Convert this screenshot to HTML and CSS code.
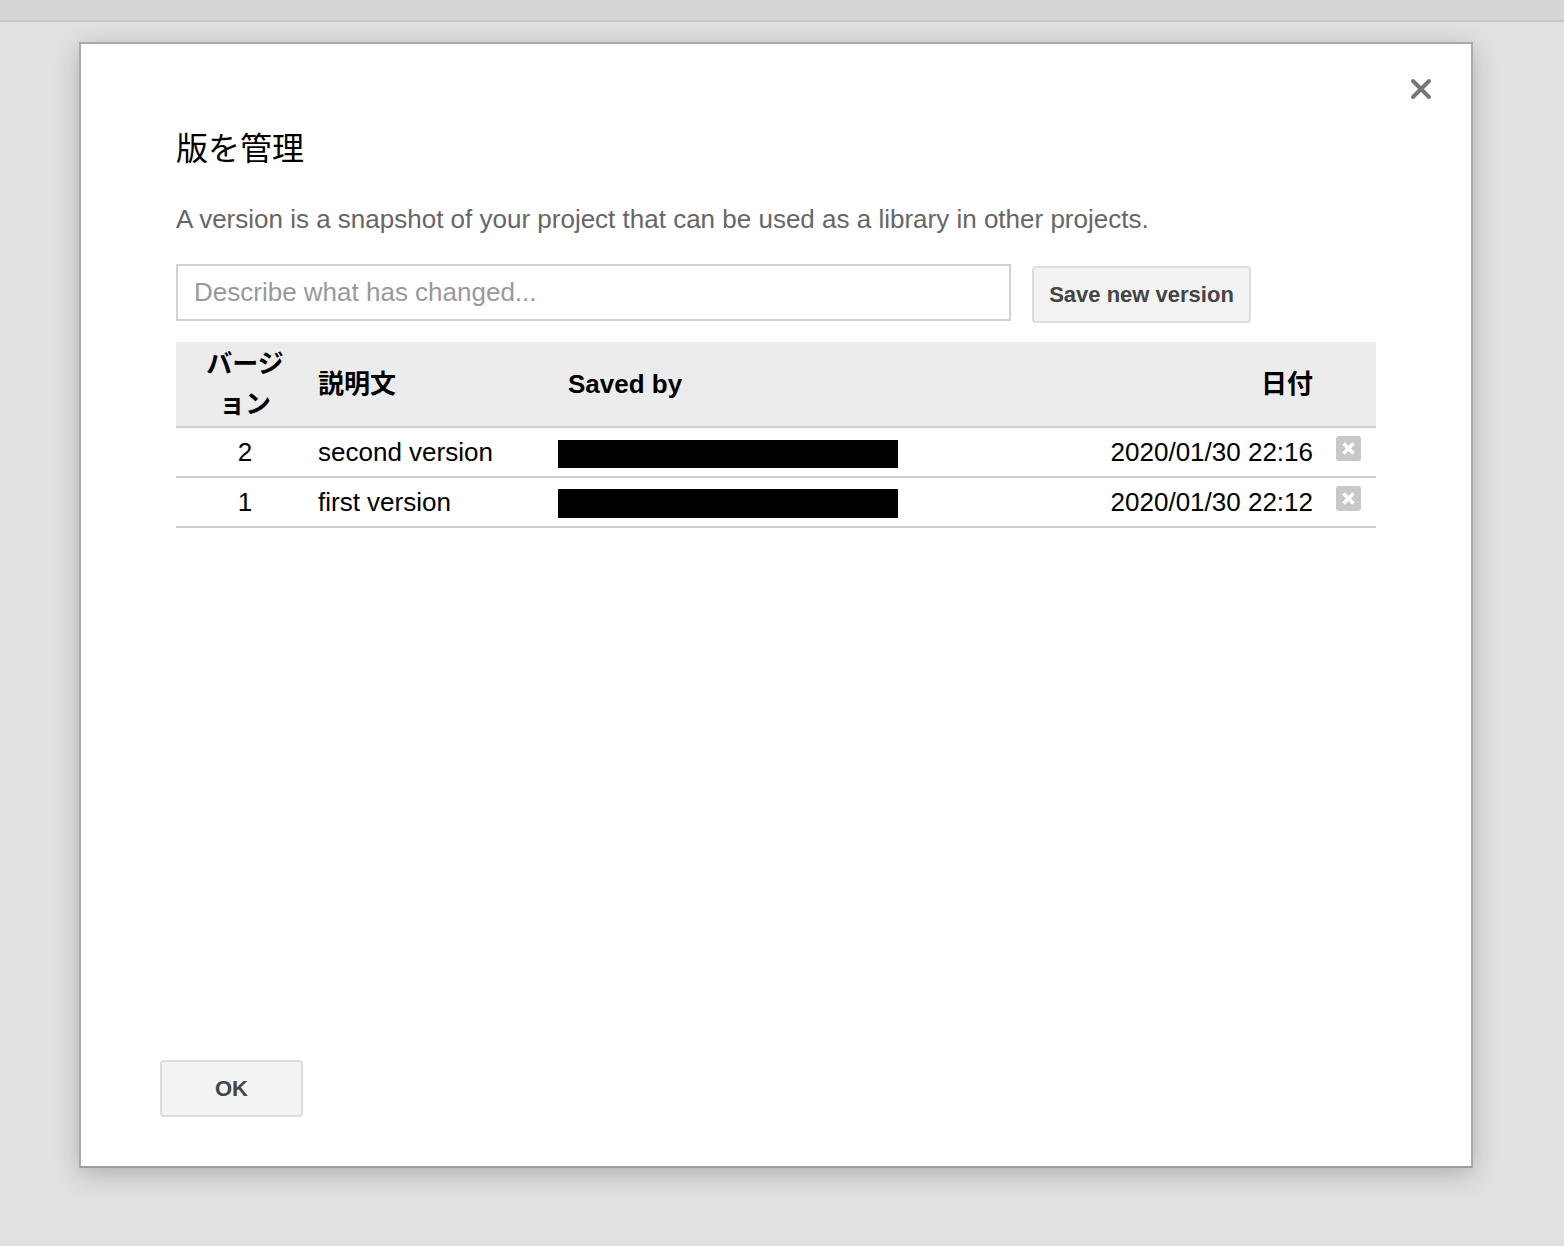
FILE: index.html
```html
<html>
<head>
<meta charset="utf-8"/>
<title>版を管理</title>
<link rel="stylesheet" href="styles.css">
</head>
<body>
<div class="topbar"></div>

<div class="dialog">
	<a class="close" title="閉じる">
		<svg width="22" height="22" viewBox="0 0 22 22"><path d="M3 3 L19 19 M19 3 L3 19" stroke="#777" stroke-width="4" stroke-linecap="round"/></svg>
	</a>

	<div class="content">
		<h2 class="title">版を管理</h2>
		<p class="desc">A version is a snapshot of your project that can be used as a library in other projects.</p>

		<div class="newver">
			<input type="text" class="txt" placeholder="Describe what has changed...">
			<button class="btn save">Save new version</button>
		</div>

		<table class="versions">
			<tr>
				<th class="c-num"><span class="numhead">バージョン</span></th>
				<th class="c-desc">説明文</th>
				<th class="c-by">Saved by</th>
				<th class="c-date">日付</th>
				<th class="c-del"></th>
			</tr>
			<tr>
				<td class="c-num">2</td>
				<td class="c-desc">second version</td>
				<td class="c-by"><div class="redact"></div></td>
				<td class="c-date">2020/01/30 22:16</td>
				<td class="c-del"><a class="del"><svg width="25" height="25" viewBox="0 0 25 25"><rect width="25" height="25" rx="3" fill="#c8c8c8"/><path d="M7.5 7.5 L17.5 17.5 M17.5 7.5 L7.5 17.5" stroke="#fff" stroke-width="3.6"/></svg></a></td>
			</tr>
			<tr>
				<td class="c-num">1</td>
				<td class="c-desc">first version</td>
				<td class="c-by"><div class="redact r2"></div></td>
				<td class="c-date">2020/01/30 22:12</td>
				<td class="c-del"><a class="del"><svg width="25" height="25" viewBox="0 0 25 25"><rect width="25" height="25" rx="3" fill="#c8c8c8"/><path d="M7.5 7.5 L17.5 17.5 M17.5 7.5 L7.5 17.5" stroke="#fff" stroke-width="3.6"/></svg></a></td>
			</tr>
		</table>
	</div>

	<div class="footer">
		<button class="btn ok">OK</button>
	</div>
</div>
</body>
</html>
```

FILE: styles.css
```css
html, body { margin: 0; padding: 0; }
body {
	background-color: #e1e1e1;
	font-family: "Liberation Sans", Arial, "Noto Sans CJK JP", sans-serif;
	height: 1246px;
	overflow: hidden;
}
.topbar {
	height: 20px;
	background-color: #d6d6d6;
	border-bottom: 2px solid #c6c6c6;
}
.dialog {
	position: relative;
	box-sizing: border-box;
	width: 1394px;
	height: 1126px;
	margin: 20px 0 0 79px;
	background-color: white;
	border: 2px solid #a9a9a9;
	border-bottom-color: #9c9c9c;
	box-shadow: 0 6px 24px rgba(0, 0, 0, 0.22);
	display: flex;
	flex-direction: column;
}
.close {
	position: absolute;
	top: 34px;
	right: 39px;
	width: 22px;
	height: 22px;
	cursor: pointer;
}
.close svg { display: block; }
.content { padding: 85px 95px 0 95px; }
.title {
	margin: 0;
	font-size: 32px;
	line-height: 40px;
	font-weight: normal;
	color: black;
}
.desc {
	margin: 34px 0 0 0;
	font-size: 26px;
	line-height: 32px;
	color: #666;
}
.newver {
	display: flex;
	align-items: flex-start;
	gap: 21px;
	margin-top: 29px;
}
.txt {
	box-sizing: border-box;
	width: 835px;
	height: 57px;
	border: 2px solid #d2d2d2;
	padding: 0 16px;
	font-family: inherit;
	font-size: 26px;
	color: #333;
	outline: none;
}
.txt::placeholder { color: #999; }
.btn {
	box-sizing: border-box;
	height: 57px;
	background-color: #f3f3f3;
	border: 2px solid #dcdcdc;
	border-radius: 4px;
	font-family: inherit;
	font-size: 22px;
	font-weight: bold;
	color: #444;
	cursor: pointer;
}
.save { width: 219px; margin-top: 2px; padding: 0; }
.versions {
	width: 100%;
	margin-top: 19px;
	border-collapse: collapse;
	font-size: 26px;
	color: black;
}
.versions th {
	background-color: #ececec;
	font-weight: bold;
	line-height: 40px;
	padding: 2px 0 2px 0;
	border-bottom: 2px solid #cfcfcf;
	text-align: left;
}
.versions td {
	height: 50px;
	padding: 0;
	border-bottom: 2px solid #cfcfcf;
	vertical-align: middle;
}
.versions .c-num { width: 138px; padding-right: 4px; text-align: center; }
.numhead { display: inline-block; width: 80px; }
.c-desc { width: 240px; }
.versions th.c-by { padding-left: 10px; }
.versions .c-date { text-align: right; }
.versions td.c-del { width: 63px; vertical-align: top; }
.del { display: inline-block; margin: 8px 0 0 23px; cursor: pointer; }
.del svg { display: block; }
.redact {
	width: 340px;
	height: 28px;
	background-color: black;
	margin-top: 4px;
}
.r2 { height: 29px; margin-top: 2px; }
.footer {
	margin-top: auto;
	padding: 0 0 49px 79px;
}
.ok { width: 143px; }
```
